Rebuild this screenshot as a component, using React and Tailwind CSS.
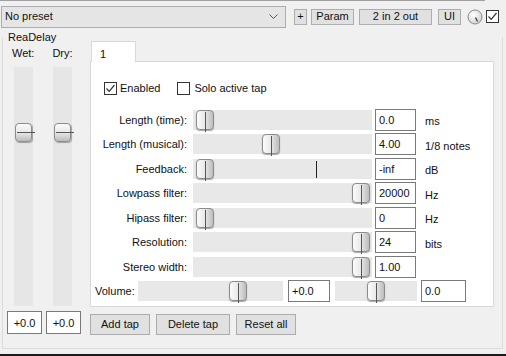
import React from "react";

const font = { fontFamily: '"Liberation Sans", Arial, sans-serif' };

function Check({ checked }) {
  return (
    <div className="w-[13px] h-[13px] border border-[#333] bg-white flex items-center justify-center shrink-0">
      {checked && (
        <svg width="11" height="11" viewBox="0 0 11 11">
          <path d="M1.5 5.5 L4.2 8.3 L9.5 2" fill="none" stroke="#333" strokeWidth="1.2" />
        </svg>
      )}
    </div>
  );
}

function HHandle({ left }) {
  return (
    <div
      className="absolute top-0 w-[18px] h-[20px] rounded-[4px] border border-[#8c8c8c] bg-gradient-to-r from-[#fbfbfb] via-[#e8e8e8] to-[#bcbcbc] shadow-[0_1px_1px_rgba(0,0,0,0.35)]"
      style={{ left }}
    >
      <div className="absolute left-[8px] top-[1px] h-[20px] w-px bg-[#555]" />
    </div>
  );
}

function Track({ width, handle, marker }) {
  return (
    <div className="relative h-[20px] bg-[#e8e8e8] shrink-0" style={{ width }}>
      {marker !== undefined && (
        <div className="absolute top-[2px] h-[17px] w-px bg-[#222]" style={{ left: marker }} />
      )}
      {handle !== undefined && <HHandle left={handle} />}
    </div>
  );
}

function Box({ children, w = 41 }) {
  return (
    <div
      className="h-[22px] border border-[#7a7a7a] bg-white px-[3px] pt-[3px] text-[11px] leading-[14px] shrink-0 whitespace-nowrap"
      style={{ width: w }}
    >
      {children}
    </div>
  );
}

function Row({ label, handle, value, unit, marker }) {
  return (
    <div className="flex items-center h-[24.5px]">
      <div className="w-[102px] text-right pr-[6px] text-[11px] whitespace-nowrap">{label}</div>
      <Track width={179} handle={handle} marker={marker} />
      <div className="ml-[3px]">
        <Box>{value}</Box>
      </div>
      <div className="ml-[9px] text-[11px] pt-[3px] whitespace-nowrap">{unit}</div>
    </div>
  );
}

function VHandle() {
  return (
    <div className="absolute left-[1px] top-[56px] w-[17px] h-[19px] rounded-[4px] border border-[#8c8c8c] bg-gradient-to-b from-[#fbfbfb] via-[#e8e8e8] to-[#bcbcbc] shadow-[1px_1px_1px_rgba(0,0,0,0.3)]">
      <div className="absolute top-[8px] left-[1px] w-[18px] h-px bg-[#555]" />
    </div>
  );
}

function Btn({ children, w, className = "" }) {
  return (
    <div
      className={"border border-[#adadad] bg-[#e1e1e1] flex items-center justify-center text-[11px] shrink-0 whitespace-nowrap " + className}
      style={{ width: w }}
    >
      {children}
    </div>
  );
}

export default function App() {
  return (
    <div className="w-[506px] h-[356px] bg-[#f0f0f0] text-[#111] overflow-hidden relative" style={font}>
      <div className="h-px bg-[#a0a0a0] w-[485px]" />
      {/* top bar */}
      <div className="h-[31px] flex items-center">
        <div className="ml-[1px] w-[285px] h-[22px] border border-[#acacac] bg-[#e5e5e5] flex items-center pl-[3px] pr-[7px] text-[11px]">
          <span className="flex-1">No preset</span>
          <svg width="9" height="6" viewBox="0 0 9 6">
            <path d="M0.5 0.5 L4.5 4.5 L8.5 0.5" fill="none" stroke="#555" strokeWidth="1" />
          </svg>
        </div>
        <Btn w={13} className="ml-[8px] h-[16px]">+</Btn>
        <Btn w={43} className="ml-[4px] h-[16px]">Param</Btn>
        <Btn w={73} className="ml-[5px] h-[16px]">2 in 2 out</Btn>
        <Btn w={23} className="ml-[6px] h-[16px]">UI</Btn>
        <svg width="16" height="16" viewBox="0 0 16 16" className="ml-[6px]">
          <defs>
            <radialGradient id="kg" cx="0.4" cy="0.35" r="0.7">
              <stop offset="0" stopColor="#ffffff" />
              <stop offset="1" stopColor="#d0d0d0" />
            </radialGradient>
          </defs>
          <circle cx="8" cy="8" r="7" fill="url(#kg)" stroke="#8a8a8a" strokeWidth="1" />
          <path d="M8.5 8.5 L10.5 12.5" stroke="#333" strokeWidth="1.2" />
        </svg>
        <div className="ml-[3px]">
          <Check checked />
        </div>
      </div>

      {/* group frame */}
      <div className="absolute left-[2px] top-[37px] w-[501px] h-[312px] border border-[#dcdcdc] border-t-0" />
      <div className="relative text-[11px] pl-[8px] leading-[12px] h-[10px] -mt-[1px]">ReaDelay</div>

      <div className="relative flex">
        {/* left column */}
        <div className="w-[90px] shrink-0 flex flex-col">
          <div className="flex text-[11px] leading-[12px] pt-[6px] h-[26px]">
            <span className="ml-[12px]">Wet:</span>
            <span className="ml-[18px]">Dry:</span>
          </div>
          <div className="flex h-[239px]">
            <div className="relative ml-[14px] w-[19px] bg-[#e6e6e6]">
              <VHandle />
            </div>
            <div className="relative ml-[20px] w-[19px] bg-[#e6e6e6]">
              <VHandle />
            </div>
          </div>
          <div className="flex mt-[5px] ml-[7px] gap-[4px]">
            <div className="w-[35px] h-[23px] border border-[#7a7a7a] bg-white text-[11px] flex justify-center pt-[3px]">+0.0</div>
            <div className="w-[35px] h-[23px] border border-[#7a7a7a] bg-white text-[11px] flex justify-center pt-[3px]">+0.0</div>
          </div>
        </div>

        {/* right panel */}
        <div className="flex flex-col">
          <div className="ml-[1px] w-[45px] h-[21px] bg-white border border-[#d9d9d9] border-b-0 text-[11px] pl-[8px] pt-[4px] relative z-10">1</div>
          <div className="w-[404px] h-[246px] bg-white border border-[#d9d9d9] -mt-px flex flex-col">
            <div className="flex items-center mt-[18px] ml-[13px] text-[11px]">
              <Check checked />
              <span className="ml-[3px]">Enabled</span>
              <div className="ml-[17px]">
                <Check />
              </div>
              <span className="ml-[4px]">Solo active tap</span>
            </div>
            <div className="mt-[11px] flex flex-col">
              <Row label="Length (time):" handle={3} value="0.0" unit="ms" />
              <Row label="Length (musical):" handle={69} value="4.00" unit="1/8 notes" />
              <Row label="Feedback:" handle={3} marker={123} value="-inf" unit="dB" />
              <Row label="Lowpass filter:" handle={159} value="20000" unit="Hz" />
              <Row label="Hipass filter:" handle={3} value="0" unit="Hz" />
              <Row label="Resolution:" handle={159} value="24" unit="bits" />
              <Row label="Stereo width:" handle={159} value="1.00" unit="" />
              <div className="flex items-center h-[24.5px]">
                <div className="w-[47px] pl-[4px] text-[11px]">Volume:</div>
                <Track width={145} handle={91} />
                <div className="ml-[5px]">
                  <Box w={42}>+0.0</Box>
                </div>
                <div className="ml-[5px]">
                  <Track width={82} handle={32} />
                </div>
                <div className="ml-[4px]">
                  <Box w={45}>0.0</Box>
                </div>
              </div>
            </div>
          </div>
          <div className="flex mt-[7px] gap-[6px]">
            <Btn w={60} className="h-[21px]">Add tap</Btn>
            <Btn w={74} className="h-[21px]">Delete tap</Btn>
            <Btn w={60} className="h-[21px]">Reset all</Btn>
          </div>
        </div>
      </div>

      <div className="absolute left-0 bottom-0 w-full h-[2px] bg-[#1a1a1a]" />
    </div>
  );
}
